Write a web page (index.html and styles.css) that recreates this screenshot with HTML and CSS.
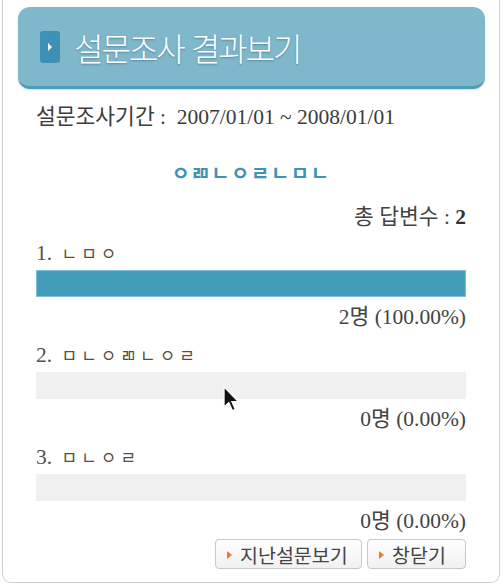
FILE: index.html
```html
<!DOCTYPE html>
<html lang="ko">
<head>
    <meta charset="UTF-8">
    <meta name="viewport" content="width=device-width, initial-scale=1.0">
    <title>설문조사 결과보기</title>
    <link rel="stylesheet" href="styles.css">
</head>
<body>
    <div class="poll-box">
        <div class="poll-header">
            <span class="header-icon">
                <svg width="6" height="8" viewBox="0 0 6 8"><path d="M1 0 L5 4 L1 8 Z" fill="#fff"/></svg>
            </span>
            <h1>설문조사 결과보기</h1>
        </div>

        <p class="period">설문조사기간 :&nbsp; 2007/01/01 ~ 2008/01/01</p>
        <p class="question">ㅇㄻㄴㅇㄹㄴㅁㄴ</p>
        <p class="total">총 답변수 : <b>2</b></p>

        <div class="item">
            <p class="item-label">1. <span class="jamo">ㄴㅁㅇ</span></p>
            <div class="bar"><div class="bar-fill" style="width: 100%"></div></div>
            <p class="item-count">2명 (100.00%)</p>
        </div>
        <div class="item">
            <p class="item-label">2. <span class="jamo">ㅁㄴㅇㄻㄴㅇㄹ</span></p>
            <div class="bar"></div>
            <p class="item-count">0명 (0.00%)</p>
        </div>
        <div class="item">
            <p class="item-label">3. <span class="jamo">ㅁㄴㅇㄹ</span></p>
            <div class="bar"></div>
            <p class="item-count">0명 (0.00%)</p>
        </div>

        <div class="buttons">
            <button class="btn btn-past">지난설문보기</button>
            <button class="btn btn-close">창닫기</button>
        </div>

        <svg class="cursor" width="17" height="26" viewBox="0 0 12 19">
            <path d="M0.5 0.5 L0.5 15.5 L4 12.2 L6.6 18 L8.8 17 L6.3 11.4 L11 11.4 Z" fill="#111" stroke="#fff" stroke-width="1"/>
        </svg>
    </div>
</body>
</html>
```

FILE: styles.css
```css
body {
    margin: 0;
    background: #fff;
    font-family: "Liberation Serif", "Noto Sans CJK KR", serif;
    font-size: 21.5px;
    color: #444;
}
p {
    margin: 0;
    height: 24px;
    line-height: 24px;
    white-space: nowrap;
}
.poll-box {
    position: relative;
    width: 496px;
    margin-left: 2px;
    padding: 7px 0 13px;
    border: 1px solid #cfcfcf;
    border-top: none;
    border-radius: 0 0 9px 9px;
}
.poll-header {
    display: flex;
    align-items: center;
    height: 79px;
    margin: 0 14px 0 15px;
    padding-left: 22px;
    background: #80b8cb;
    border-bottom: 3px solid #4d9dba;
    border-radius: 12px;
    box-shadow: 0 1px 2px rgba(0, 0, 0, 0.15);
}
.header-icon {
    display: flex;
    align-items: center;
    justify-content: center;
    width: 20px;
    height: 32px;
    background: #3d91b6;
    border-radius: 3px;
}
.poll-header h1 {
    margin: 0 0 0 14px;
    font-family: "Noto Sans CJK KR", sans-serif;
    font-size: 32px;
    font-weight: 300;
    letter-spacing: -2px;
    color: #fff;
    text-shadow: 0 1px 2px rgba(40, 90, 110, 0.5);
}
.period {
    margin: 16px 0 0 33px;
    color: #3c3c3c;
}
.question {
    margin-top: 32px;
    text-align: center;
    font-family: "Noto Sans CJK KR", sans-serif;
    font-size: 20px;
    font-weight: bold;
    letter-spacing: 1.5px;
    color: #3f93b5;
}
.total {
    margin: 20px 33px 0 0;
    text-align: right;
}
.total b {
    color: #333;
}
.item {
    margin: 12px 33px 0 33px;
}
.item + .item {
    margin-top: 14px;
}
.item-label {
    color: #5a4d40;
}
.jamo {
    margin-left: 4px;
    font-family: "Noto Sans CJK KR", sans-serif;
    font-size: 17px;
    line-height: 1;
    letter-spacing: 4px;
}
.bar {
    height: 27px;
    margin-top: 5px;
    background: #f0f0f0;
}
.bar-fill {
    height: 100%;
    box-sizing: border-box;
    background: #439cba;
    border: 1px solid #7fc0d6;
}
.item-count {
    margin-top: 8px;
    text-align: right;
}
.buttons {
    display: flex;
    justify-content: flex-end;
    gap: 5px;
    margin: 6px 33px 0 0;
}
.btn {
    position: relative;
    display: flex;
    align-items: center;
    height: 30px;
    padding: 0 0 0 24px;
    font-family: "Noto Sans CJK KR", sans-serif;
    font-size: 19.5px;
    color: #444;
    background: linear-gradient(#ffffff, #f1f1f1);
    border: 1px solid #c8c8c8;
    border-radius: 4px;
}
.btn::before {
    content: "";
    position: absolute;
    left: 11px;
    top: 11px;
    border-left: 5px solid #f07a28;
    border-top: 4px solid transparent;
    border-bottom: 4px solid transparent;
}
.btn-past {
    width: 147px;
}
.btn-close {
    width: 99px;
}
.cursor {
    position: absolute;
    left: 220px;
    top: 386px;
}
```
